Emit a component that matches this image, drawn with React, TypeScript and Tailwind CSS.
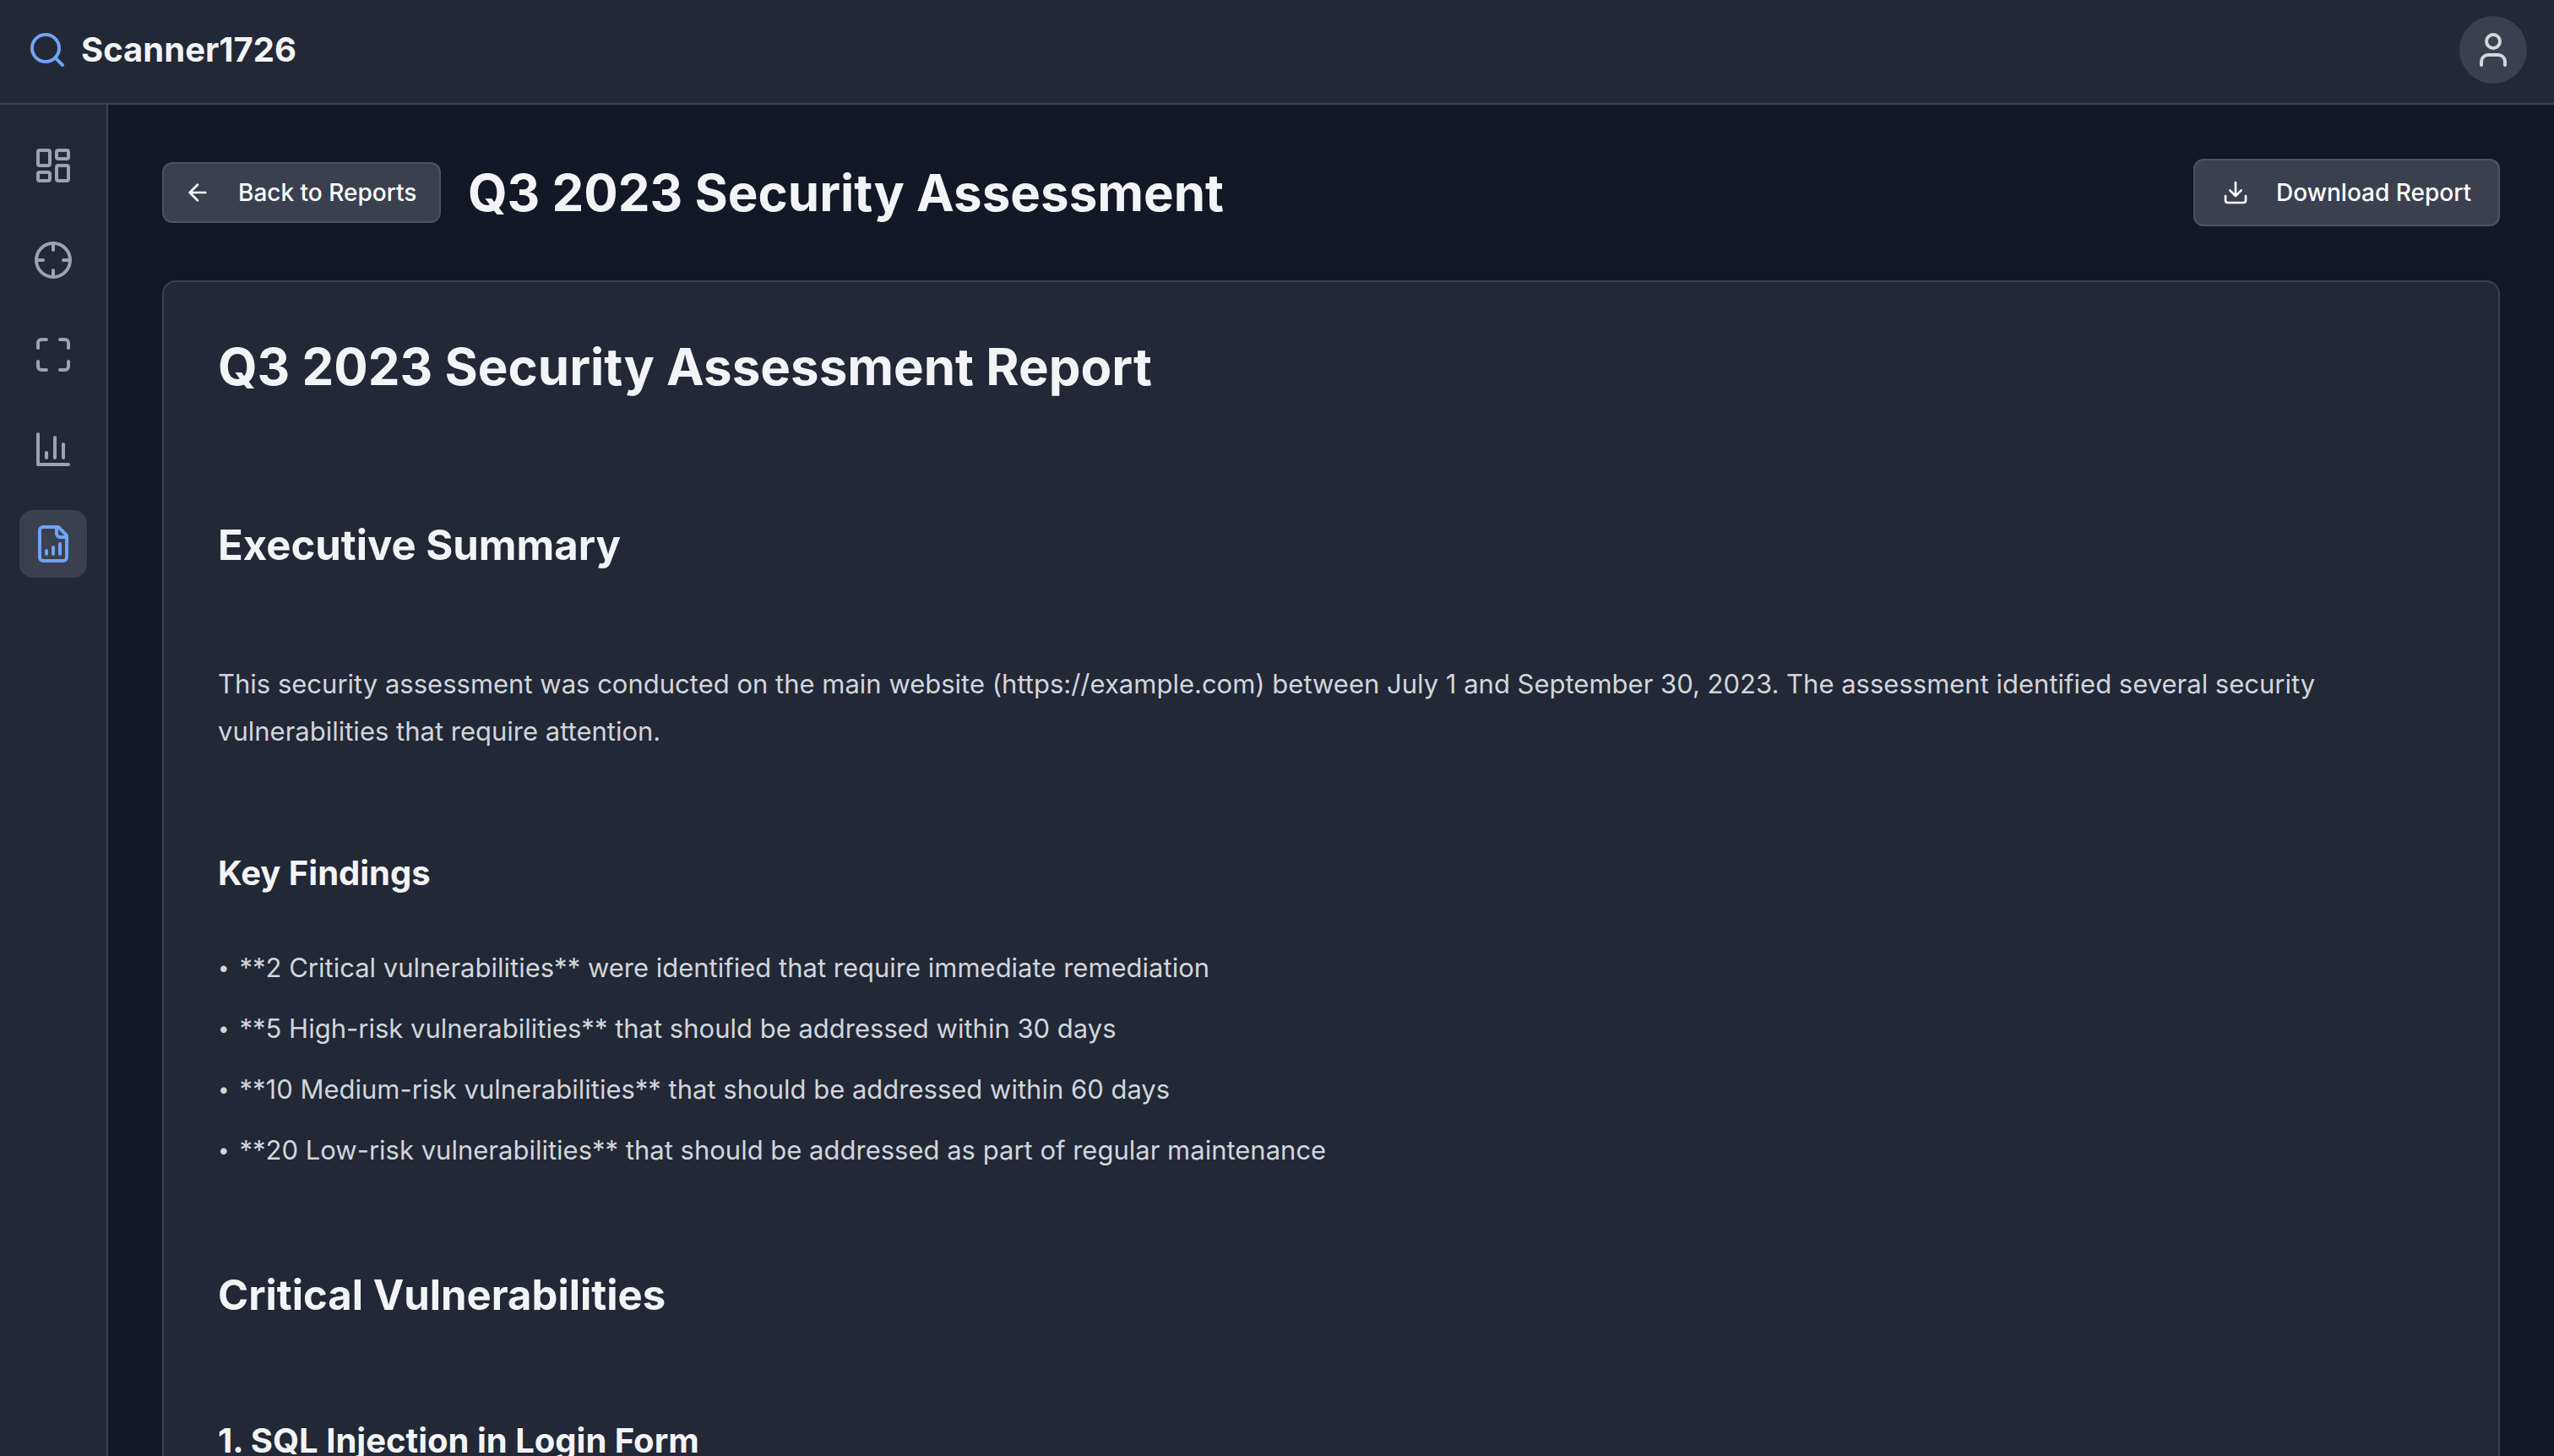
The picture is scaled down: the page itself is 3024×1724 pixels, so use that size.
import type { ReactNode } from "react";

function Icon({ className, children }: { className: string; children: ReactNode }) {
  return (
    <svg
      viewBox="0 0 24 24"
      fill="none"
      stroke="currentColor"
      strokeWidth={2}
      strokeLinecap="round"
      strokeLinejoin="round"
      aria-hidden="true"
      className={className}
    >
      {children}
    </svg>
  );
}

const navItems = [
  {
    label: "Dashboard",
    href: "#dashboard",
    active: false,
    icon: (
      <>
        <rect width="7" height="9" x="3" y="3" rx="1" />
        <rect width="7" height="5" x="14" y="3" rx="1" />
        <rect width="7" height="9" x="14" y="12" rx="1" />
        <rect width="7" height="5" x="3" y="16" rx="1" />
      </>
    ),
  },
  {
    label: "Targets",
    href: "#targets",
    active: false,
    icon: (
      <>
        <circle cx="12" cy="12" r="10" />
        <path d="M22 12h-4M6 12H2M12 6V2M12 22v-4" />
      </>
    ),
  },
  {
    label: "Scans",
    href: "#scans",
    active: false,
    icon: (
      <path d="M3 8V5a2 2 0 0 1 2-2h3M16 3h3a2 2 0 0 1 2 2v3M21 16v3a2 2 0 0 1-2 2h-3M8 21H5a2 2 0 0 1-2-2v-3" />
    ),
  },
  {
    label: "Statistics",
    href: "#statistics",
    active: false,
    icon: <path d="M3 3v18h18M18 17V9M13 17V5M8 17v-3" />,
  },
  {
    label: "Reports",
    href: "#reports",
    active: true,
    icon: (
      <>
        <path d="M15 2H6a2 2 0 0 0-2 2v16a2 2 0 0 0 2 2h12a2 2 0 0 0 2-2V7Z" />
        <path d="M14 2v4a2 2 0 0 0 2 2h4M8 18v-2M12 18v-4M16 18v-6" />
      </>
    ),
  },
];

const findings = [
  "**2 Critical vulnerabilities** were identified that require immediate remediation",
  "**5 High-risk vulnerabilities** that should be addressed within 30 days",
  "**10 Medium-risk vulnerabilities** that should be addressed within 60 days",
  "**20 Low-risk vulnerabilities** that should be addressed as part of regular maintenance",
];

function Header() {
  return (
    <header className="flex shrink-0 items-center justify-between border-b-2 border-[#3a404e] bg-[#222836] px-8 pt-[19px] pb-[23px]">
      <div className="flex items-center gap-4">
        <Icon className="size-12 text-[#6fa3f5]">
          <circle cx="11" cy="11" r="8" />
          <path d="m21 21-4.3-4.3" />
        </Icon>
        <span className="text-[40px] leading-14 font-bold">Scanner1726</span>
      </div>
      <button
        type="button"
        aria-label="Account"
        className="flex size-20 items-center justify-center rounded-full bg-[#3b404f] text-[#d2d5da]"
      >
        <Icon className="size-12">
          <circle cx="12" cy="7" r="4" />
          <path d="M19 21v-2a4 4 0 0 0-4-4H9a4 4 0 0 0-4 4v2" />
        </Icon>
      </button>
    </header>
  );
}

function Sidebar() {
  return (
    <nav
      aria-label="Main"
      className="flex w-32 shrink-0 flex-col items-center gap-8 border-r-2 border-[#3a404e] bg-[#222836] py-8"
    >
      {navItems.map((item) => (
        <a
          key={item.label}
          href={item.href}
          aria-label={item.label}
          className={
            item.active
              ? "flex size-20 items-center justify-center rounded-2xl bg-[#3b404f] text-[#6fa3f5]"
              : "flex size-20 items-center justify-center rounded-2xl text-[#9da2ae]"
          }
        >
          <Icon className="size-12">{item.icon}</Icon>
        </a>
      ))}
    </nav>
  );
}

export default function App() {
  return (
    <div className="flex h-screen flex-col overflow-hidden bg-[#121825] font-['Inter',sans-serif] text-[#f3f4f6]">
      <Header />
      <div className="flex min-h-0 flex-1">
        <Sidebar />
        <main className="min-w-0 flex-1 overflow-hidden p-16">
          <div className="mb-16 flex items-center justify-between">
            <div className="flex items-center gap-8">
              <button
                type="button"
                className="flex h-18 min-w-[330px] items-center gap-8 rounded-xl border-2 border-[#4c5260] bg-[#3b404f] px-6 text-[28px] leading-10 font-medium text-white"
              >
                <Icon className="size-8">
                  <path d="m12 19-7-7 7-7M19 12H5" />
                </Icon>
                Back to Reports
              </button>
              <h1 className="text-6xl leading-18 font-bold">Q3 2023 Security Assessment</h1>
            </div>
            <button
              type="button"
              className="flex h-20 items-center gap-8 rounded-xl border-2 border-[#4c5260] bg-[#3b404f] px-8 text-[28px] leading-10 font-medium text-white"
            >
              <Icon className="size-8">
                <path d="M21 15v4a2 2 0 0 1-2 2H5a2 2 0 0 1-2-2v-4M7 10l5 5 5-5M12 15V3" />
              </Icon>
              Download Report
            </button>
          </div>

          <article className="rounded-2xl border-2 border-[#3a404e] bg-[#222836] p-16 text-[31px] leading-14 text-[#d2d5da]">
            <h1 className="text-6xl leading-18 font-bold text-[#f3f4f6]">
              Q3 2023 Security Assessment Report
            </h1>
            <h2 className="mt-36 text-[49px] leading-16 font-bold text-[#f3f4f6]">Executive Summary</h2>
            <p className="mt-26">
              This security assessment was conducted on the main website (https://example.com) between July 1 and
              September 30, 2023. The assessment identified several security vulnerabilities that require attention.
            </p>
            <h3 className="mt-28 text-[40px] leading-14 font-bold text-[#f3f4f6]">Key Findings</h3>
            <ul className="mt-14 flex flex-col gap-4">
              {findings.map((finding) => (
                <li key={finding} className="flex gap-3">
                  <span aria-hidden="true" className="text-2xl leading-14">•</span>
                  <span>{finding}</span>
                </li>
              ))}
            </ul>
            <h2 className="mt-28 text-[49px] leading-16 font-bold text-[#f3f4f6]">Critical Vulnerabilities</h2>
            <h3 className="mt-28 text-[40px] leading-14 font-bold text-[#f3f4f6]">1. SQL Injection in Login Form</h3>
          </article>
        </main>
      </div>
    </div>
  );
}
